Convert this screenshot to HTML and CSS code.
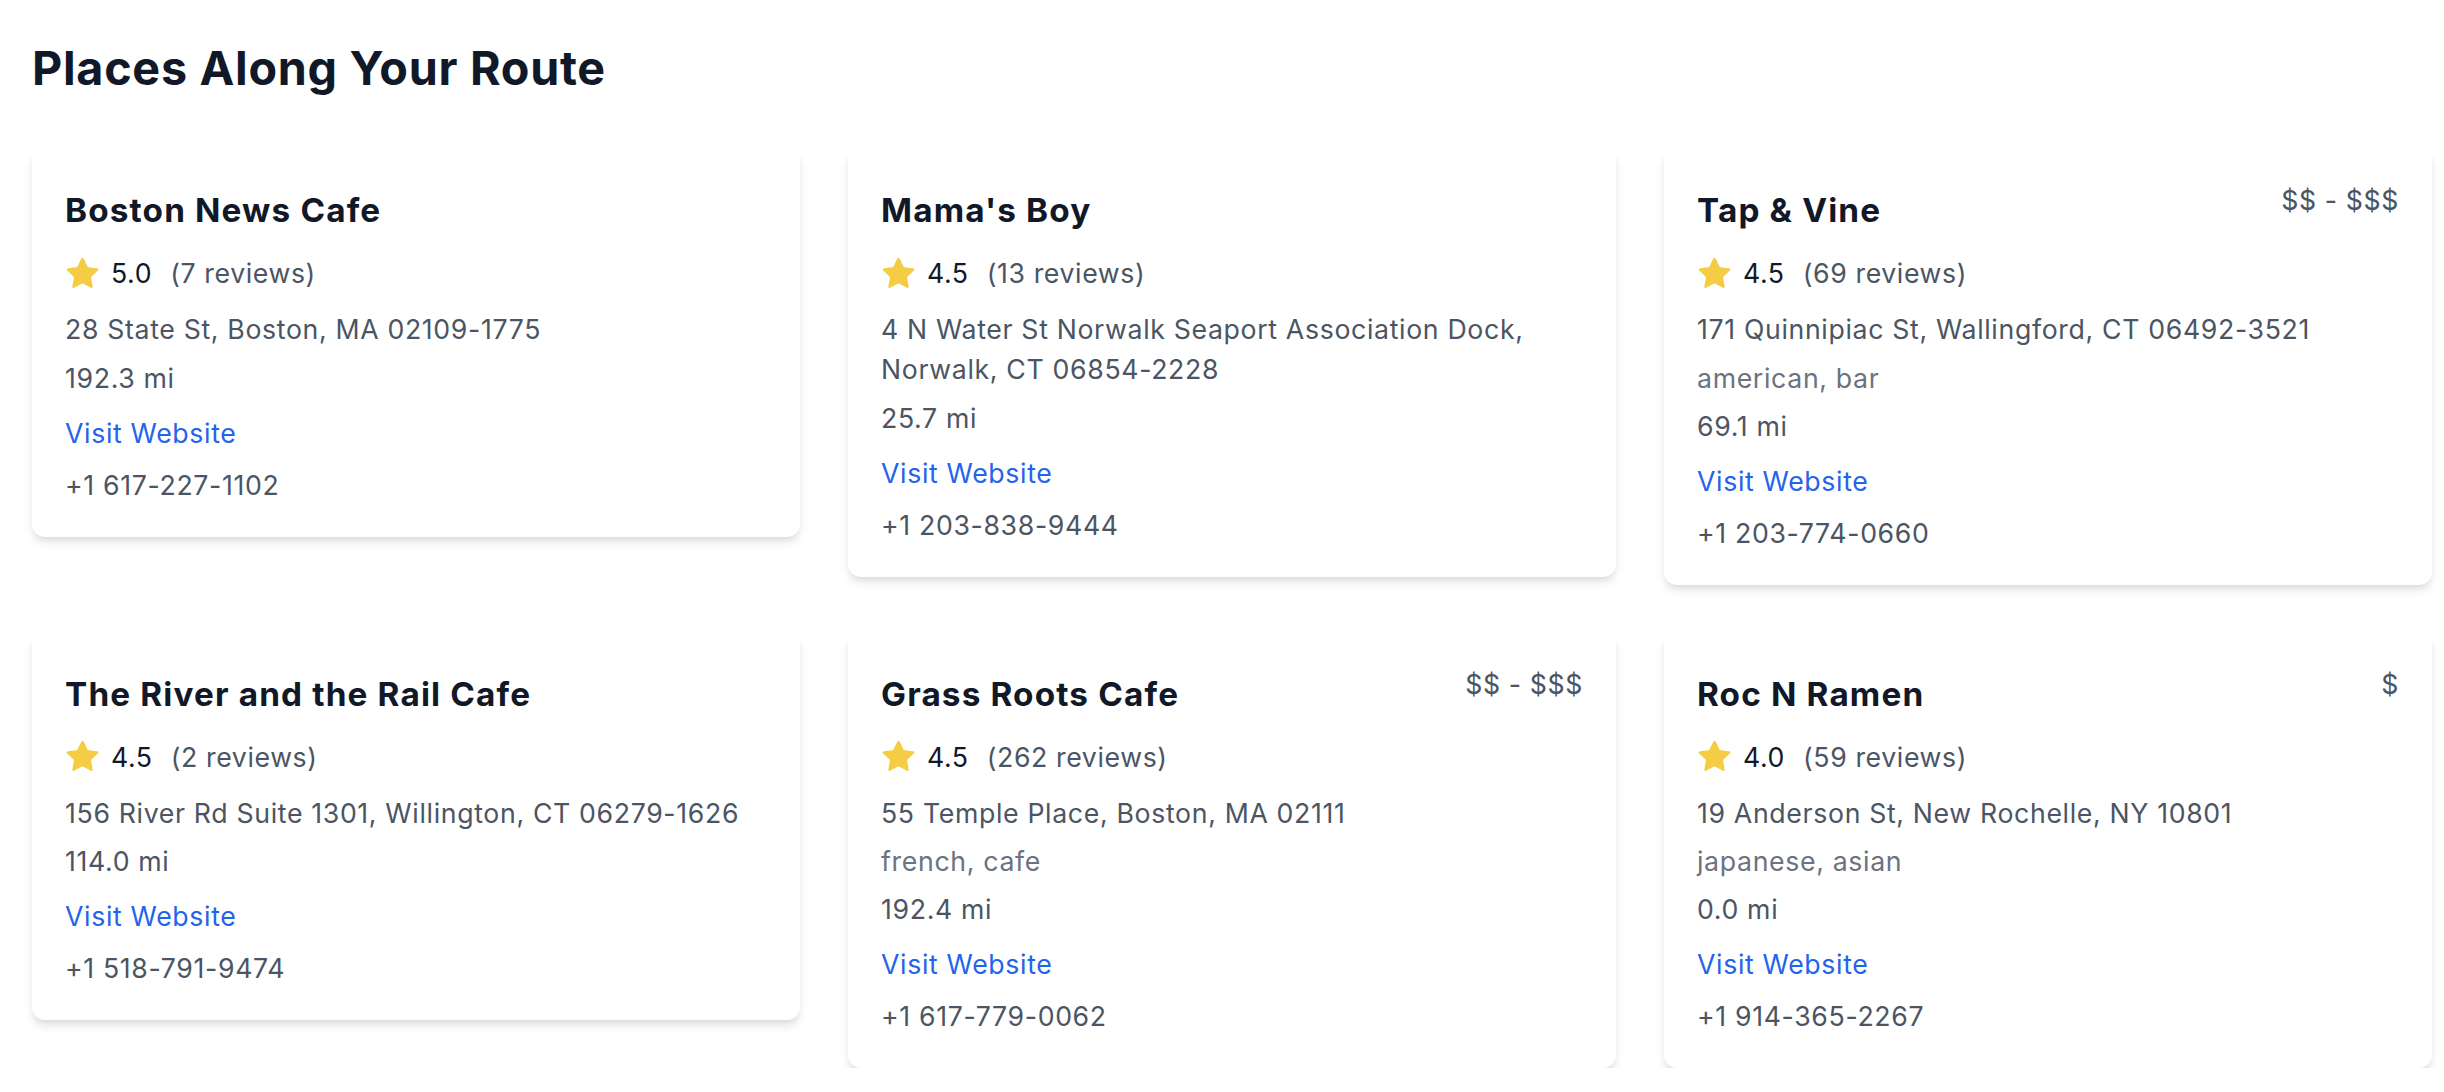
FILE: index.html
```html
<!DOCTYPE html>
<html lang="en">
<head>
<meta charset="utf-8">
<title>Places Along Your Route</title>
<link rel="stylesheet" href="styles.css">
</head>
<body>
<main class="page">
  <h2 class="page-title">Places Along Your Route</h2>
  <div class="grid">
    <article class="card">
      <div class="card-head"><h3 class="name">Boston News Cafe</h3></div>
      <div class="rating"><svg class="star" viewBox="0 0 24 24"><path d="M12 2.6l2.9 5.9 6.5.95-4.7 4.6 1.1 6.5L12 17.5l-5.8 3.05 1.1-6.5-4.7-4.6 6.5-.95z"/></svg><span class="score">5.0</span><span class="count">(7 reviews)</span></div>
      <p class="line addr">28 State St, Boston, MA 02109-1775</p>
      <p class="line dist">192.3 mi</p>
      <a class="line link" href="#">Visit Website</a>
      <p class="line phone">+1 617-227-1102</p>
    </article>
    <article class="card">
      <div class="card-head"><h3 class="name">Mama's Boy</h3></div>
      <div class="rating"><svg class="star" viewBox="0 0 24 24"><path d="M12 2.6l2.9 5.9 6.5.95-4.7 4.6 1.1 6.5L12 17.5l-5.8 3.05 1.1-6.5-4.7-4.6 6.5-.95z"/></svg><span class="score">4.5</span><span class="count">(13 reviews)</span></div>
      <p class="line addr">4 N Water St Norwalk Seaport Association Dock, Norwalk, CT 06854-2228</p>
      <p class="line dist">25.7 mi</p>
      <a class="line link" href="#">Visit Website</a>
      <p class="line phone">+1 203-838-9444</p>
    </article>
    <article class="card">
      <div class="card-head"><h3 class="name">Tap &amp; Vine</h3><span class="price">$$ - $$$</span></div>
      <div class="rating"><svg class="star" viewBox="0 0 24 24"><path d="M12 2.6l2.9 5.9 6.5.95-4.7 4.6 1.1 6.5L12 17.5l-5.8 3.05 1.1-6.5-4.7-4.6 6.5-.95z"/></svg><span class="score">4.5</span><span class="count">(69 reviews)</span></div>
      <p class="line addr">171 Quinnipiac St, Wallingford, CT 06492-3521</p>
      <p class="line cuisine">american, bar</p>
      <p class="line dist">69.1 mi</p>
      <a class="line link" href="#">Visit Website</a>
      <p class="line phone">+1 203-774-0660</p>
    </article>
    <article class="card">
      <div class="card-head"><h3 class="name">The River and the Rail Cafe</h3></div>
      <div class="rating"><svg class="star" viewBox="0 0 24 24"><path d="M12 2.6l2.9 5.9 6.5.95-4.7 4.6 1.1 6.5L12 17.5l-5.8 3.05 1.1-6.5-4.7-4.6 6.5-.95z"/></svg><span class="score">4.5</span><span class="count">(2 reviews)</span></div>
      <p class="line addr">156 River Rd Suite 1301, Willington, CT 06279-1626</p>
      <p class="line dist">114.0 mi</p>
      <a class="line link" href="#">Visit Website</a>
      <p class="line phone">+1 518-791-9474</p>
    </article>
    <article class="card">
      <div class="card-head"><h3 class="name">Grass Roots Cafe</h3><span class="price">$$ - $$$</span></div>
      <div class="rating"><svg class="star" viewBox="0 0 24 24"><path d="M12 2.6l2.9 5.9 6.5.95-4.7 4.6 1.1 6.5L12 17.5l-5.8 3.05 1.1-6.5-4.7-4.6 6.5-.95z"/></svg><span class="score">4.5</span><span class="count">(262 reviews)</span></div>
      <p class="line addr">55 Temple Place, Boston, MA 02111</p>
      <p class="line cuisine">french, cafe</p>
      <p class="line dist">192.4 mi</p>
      <a class="line link" href="#">Visit Website</a>
      <p class="line phone">+1 617-779-0062</p>
    </article>
    <article class="card">
      <div class="card-head"><h3 class="name">Roc N Ramen</h3><span class="price">$</span></div>
      <div class="rating"><svg class="star" viewBox="0 0 24 24"><path d="M12 2.6l2.9 5.9 6.5.95-4.7 4.6 1.1 6.5L12 17.5l-5.8 3.05 1.1-6.5-4.7-4.6 6.5-.95z"/></svg><span class="score">4.0</span><span class="count">(59 reviews)</span></div>
      <p class="line addr">19 Anderson St, New Rochelle, NY 10801</p>
      <p class="line cuisine">japanese, asian</p>
      <p class="line dist">0.0 mi</p>
      <a class="line link" href="#">Visit Website</a>
      <p class="line phone">+1 914-365-2267</p>
    </article>
  </div>
</main>
</body>
</html>
```

FILE: styles.css
```css
html, body {
  margin: 0;
  padding: 0;
  background: #ffffff;
}

body {
  font-family: Inter, "Noto Sans", "Liberation Sans", sans-serif;
  color: #111827;
}

.page {
  width: 2400px;
  padding: 33px 0 0 32px;
}

.page-title {
  margin: 0 0 44px;
  font-size: 46.7px;
  line-height: 70px;
  font-weight: 700;
  letter-spacing: 0.72px;
  color: #111827;
}

.grid {
  display: grid;
  grid-template-columns: repeat(3, 1fr);
  column-gap: 48px;
  row-gap: 46px;
  align-items: start;
}

.card {
  background: #ffffff;
  border-radius: 13px;
  padding: 34px 33px 32px;
  box-shadow: 0 6.7px 10px -1.7px rgba(0, 0, 0, 0.1), 0 3.3px 6.7px -3.3px rgba(0, 0, 0, 0.1);
}

.card-head {
  display: flex;
  justify-content: space-between;
  align-items: flex-start;
  margin-bottom: 14px;
}

.name {
  margin: 0;
  font-size: 33.3px;
  line-height: 58px;
  font-weight: 700;
  letter-spacing: 1.15px;
  color: #111827;
}

.price {
  margin-top: -1px;
  font-size: 26.7px;
  line-height: 40px;
  letter-spacing: 0.6px;
  color: #4b5563;
}

.rating {
  display: flex;
  align-items: center;
  height: 40px;
  margin-bottom: 16px;
  font-size: 26.7px;
  line-height: 40px;
  letter-spacing: 0.6px;
}

.star {
  width: 37px;
  height: 37px;
  margin-left: -1px;
  margin-right: 10px;
  flex-shrink: 0;
}

.star path {
  fill: #f4cd45;
  stroke: #f4cd45;
  stroke-width: 1.6;
  stroke-linejoin: round;
}

.score {
  color: #111827;
}

.count {
  margin-left: 18px;
  color: #4b5563;
}

.line {
  display: block;
  margin: 0;
  font-size: 26.7px;
  line-height: 40px;
  letter-spacing: 0.65px;
  color: #4b5563;
}

.addr {
  margin-bottom: 8.7px;
}

.cuisine {
  color: #6b7280;
  margin-bottom: 8px;
}

.dist {
  margin-bottom: 15px;
}

.link {
  color: #2563eb;
  text-decoration: none;
  margin-bottom: 12px;
}

.phone {
  color: #4b5563;
}
```
